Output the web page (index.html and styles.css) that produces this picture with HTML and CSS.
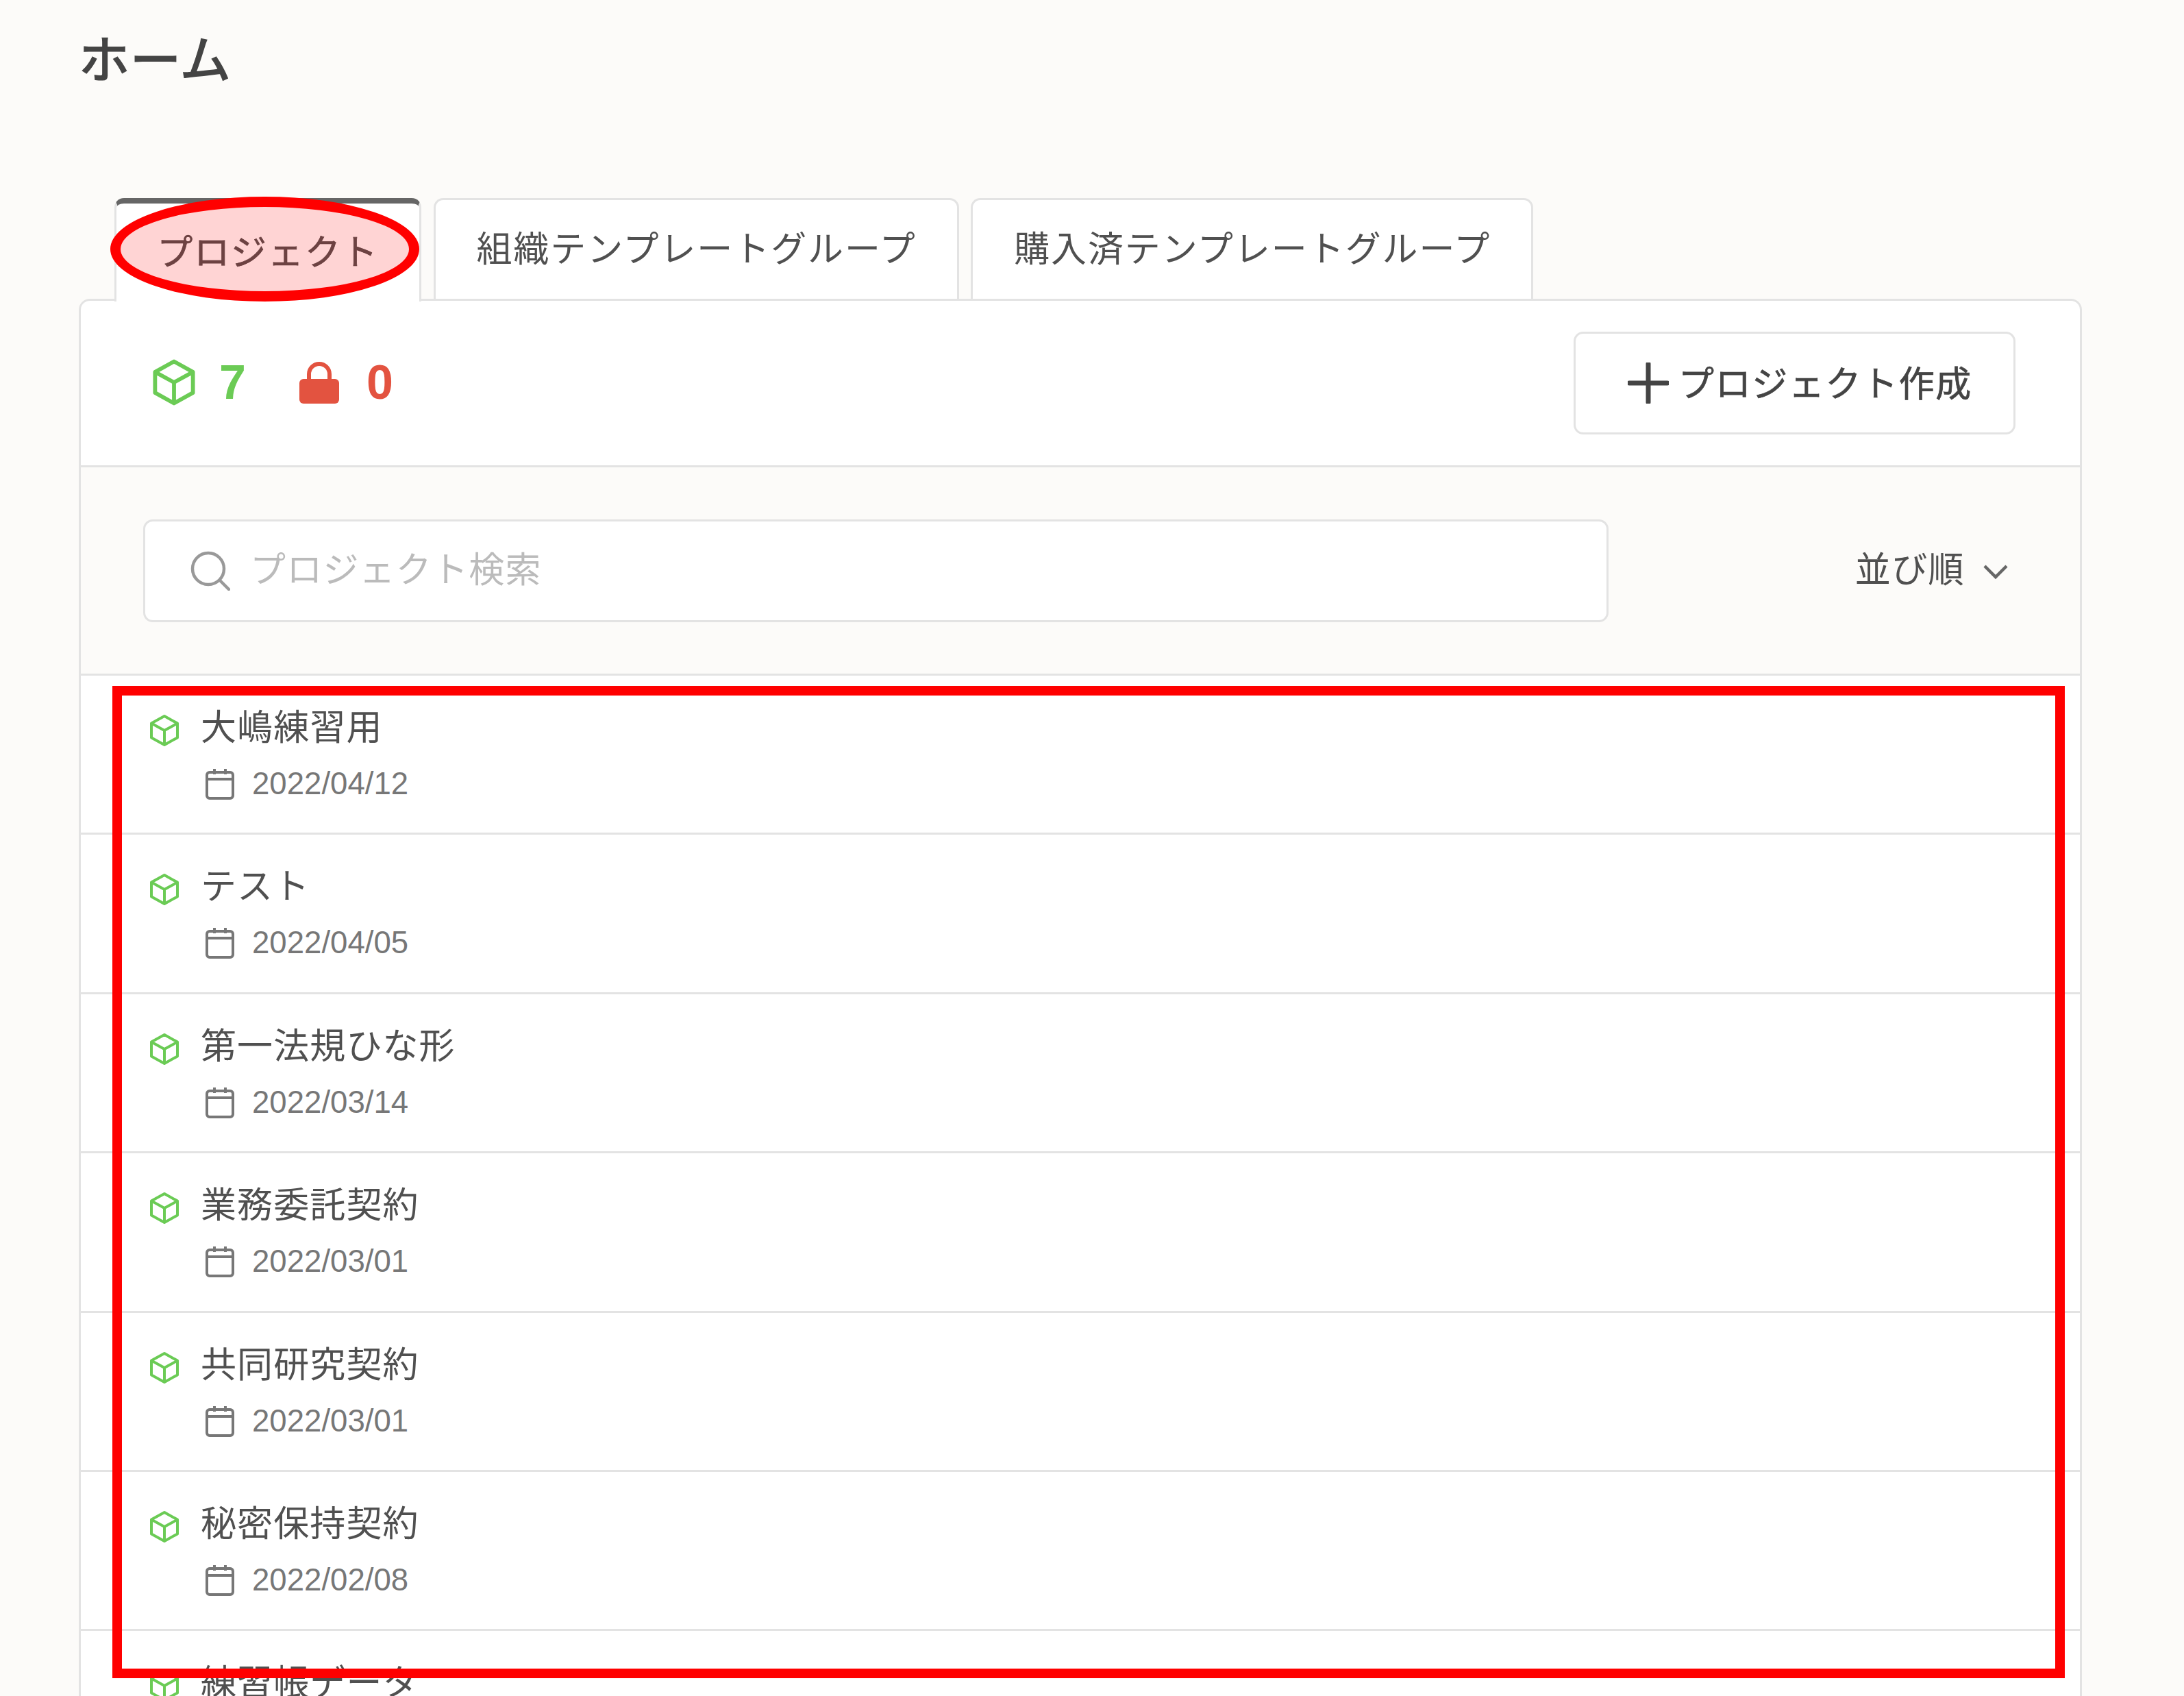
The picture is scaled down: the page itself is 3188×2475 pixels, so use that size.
FILE: index.html
```html
<!DOCTYPE html>
<html lang="ja">
<head>
<meta charset="utf-8">
<title>ホーム</title>
<link rel="stylesheet" href="styles.css">
</head>
<body>
<svg class="defs" width="0" height="0" aria-hidden="true">
  <symbol id="cube" viewBox="0 0 22 24"><path d="M11 1.5 20.5 6.8V17.2L11 22.5 1.5 17.2V6.8ZM1.5 6.8 11 12 20.5 6.8M11 12V22.5" fill="none" stroke="currentColor" stroke-width="2" stroke-linejoin="round"/></symbol>
  <symbol id="cal" viewBox="0 0 42 46"><rect x="2" y="6" width="38" height="38" rx="4" fill="none" stroke="currentColor" stroke-width="4"/><path d="M2 16H40M13 1V9M29 1V9" fill="none" stroke="currentColor" stroke-width="4"/></symbol>
</svg>
<h1 class="page-title">ホーム</h1>
<nav class="tabs">
  <div class="tab tab-active">プロジェクト</div>
  <div class="tab">組織テンプレートグループ</div>
  <div class="tab">購入済テンプレートグループ</div>
</nav>
<main class="card">
  <section class="stats">
    <div class="stat stat-green">
      <svg class="stat-cube"><use href="#cube"/></svg><span>7</span>
    </div>
    <div class="stat stat-red">
      <svg class="stat-lock" viewBox="0 0 58 62"><path d="M14 28V19a15 15 0 0 1 30 0V28" fill="none" stroke="currentColor" stroke-width="6"/><rect y="26" width="58" height="36" rx="6" fill="currentColor"/></svg><span>0</span>
    </div>
    <button class="create-btn">
      <svg class="plus" viewBox="0 0 60 60"><path d="M2 30H58M30 2V58" stroke="currentColor" stroke-width="7" stroke-linecap="round"/></svg><span class="btn-label">プロジェクト作成</span>
    </button>
  </section>
  <section class="filter">
    <div class="search">
      <svg class="search-icon" viewBox="0 0 58 58"><circle cx="26" cy="26" r="23" fill="none" stroke="currentColor" stroke-width="4.5"/><path d="M43 43 56 56" stroke="currentColor" stroke-width="4.5" stroke-linecap="round"/></svg>
      <span>プロジェクト検索</span>
    </div>
    <div class="sort">並び順<svg class="chevron" viewBox="0 0 38 24"><path d="M3 4 19 20 35 4" fill="none" stroke="currentColor" stroke-width="4.5"/></svg></div>
  </section>
  <ul class="list">
    <li class="row"><svg class="row-cube"><use href="#cube"/></svg><div><div class="row-name">大嶋練習用</div><div class="row-date"><svg class="cal"><use href="#cal"/></svg>2022/04/12</div></div></li>
    <li class="row"><svg class="row-cube"><use href="#cube"/></svg><div><div class="row-name">テスト</div><div class="row-date"><svg class="cal"><use href="#cal"/></svg>2022/04/05</div></div></li>
    <li class="row"><svg class="row-cube"><use href="#cube"/></svg><div><div class="row-name">第一法規ひな形</div><div class="row-date"><svg class="cal"><use href="#cal"/></svg>2022/03/14</div></div></li>
    <li class="row"><svg class="row-cube"><use href="#cube"/></svg><div><div class="row-name">業務委託契約</div><div class="row-date"><svg class="cal"><use href="#cal"/></svg>2022/03/01</div></div></li>
    <li class="row"><svg class="row-cube"><use href="#cube"/></svg><div><div class="row-name">共同研究契約</div><div class="row-date"><svg class="cal"><use href="#cal"/></svg>2022/03/01</div></div></li>
    <li class="row"><svg class="row-cube"><use href="#cube"/></svg><div><div class="row-name">秘密保持契約</div><div class="row-date"><svg class="cal"><use href="#cal"/></svg>2022/02/08</div></div></li>
    <li class="row"><svg class="row-cube"><use href="#cube"/></svg><div><div class="row-name">練習帳データ</div></div></li>
  </ul>
</main>
<div class="mark-ellipse"></div>
<div class="mark-rect"></div>
</body>
</html>
```

FILE: styles.css
```css
* { box-sizing: border-box; }
html, body { height: 2475px; overflow: hidden; }
body {
  margin: 0;
  position: relative;
  background: #fcfbf9;
  color: #505050;
  font-family: "Liberation Sans", "Noto Sans CJK JP", sans-serif;
  font-size: 52px;
}
.defs { position: absolute; }
.page-title {
  margin: 0;
  height: 289px;
  padding: 47px 0 0 115px;
  font-size: 74px;
  line-height: 84px;
  font-weight: 400;
  -webkit-text-stroke: 2px #444;
  letter-spacing: 1px;
  color: #444;
}
.tabs { display: flex; gap: 17.5px; margin-left: 167px; height: 147px; position: relative; }
.tab {
  height: 147px;
  padding: 0 59px 10px 60px;
  display: flex;
  align-items: center;
  background: #fff;
  border: 3px solid #e3e3e3;
  border-bottom: 0;
  border-radius: 14px 14px 0 0;
  letter-spacing: 1.9px;
  white-space: nowrap;
}
.tab-active {
  position: relative;
  z-index: 1;
  border-top: 8px solid #666;
  -webkit-text-stroke: 0.7px #4a4a4a;
  width: 448px;
  height: 151px;
  justify-content: center;
  padding: 0 0 8px;
}
.card {
  margin: 0 149px 0 115px;
  background: #fff;
  border: 3px solid #e3e3e3;
  border-bottom: 0;
  border-radius: 16px 16px 0 0;
}
.stats {
  height: 243px;
  display: flex;
  align-items: center;
  padding: 0 94px 0 104px;
  border-bottom: 3px solid #e3e3e3;
}
.stat { display: flex; align-items: center; font-size: 70px; font-weight: 700; line-height: 1; margin-top: -3px; }
.stat-green { color: #6bcb55; gap: 34px; }
.stat-red { color: #e35340; gap: 40px; margin-left: 78px; }
.stat-cube { width: 64px; height: 70px; }
.stat-lock { width: 58px; height: 62px; }
.create-btn {
  margin-left: auto;
  width: 645px;
  height: 150px;
  display: flex;
  align-items: center;
  justify-content: center;
  gap: 14px;
  background: #fff;
  border: 3px solid #e3e3e3;
  border-radius: 14px;
  color: #444;
  font: inherit;
  font-size: 52px;
  letter-spacing: 1.6px;
  padding: 0 0 0 16px;
}
.btn-label { -webkit-text-stroke: 0.7px #444; margin-top: -6px; }
.plus { width: 60px; height: 60px; }
.filter {
  height: 304px;
  display: flex;
  align-items: center;
  padding: 0 104px 0 91px;
  background: #fcfbf9;
  border-bottom: 3px solid #e3e3e3;
}
.search {
  width: 2139px;
  height: 150px;
  display: flex;
  align-items: center;
  gap: 29px;
  padding: 0 0 10px 66px;
  background: #fff;
  border: 3px solid #e3e3e3;
  border-radius: 14px;
  color: #bbb;
  letter-spacing: 1.2px;
}
.search-icon { width: 58px; height: 58px; color: #999; margin-top: 10px; }
.sort { margin-left: auto; display: flex; align-items: center; gap: 26px; letter-spacing: 1.4px; padding-bottom: 10px; }
.chevron { width: 38px; height: 24px; color: #666; margin-top: 12px; }
.list { list-style: none; margin: 0; padding: 0; }
.row {
  height: 232.4px;
  display: flex;
  align-items: flex-start;
  padding: 38px 0 0 100px;
  border-bottom: 3px solid #e3e3e3;
}
.row-cube { width: 44px; height: 48px; color: #6bcb55; margin-top: 18px; flex: none; }
.row-name { margin-left: 31px; font-size: 52px; line-height: 76px; letter-spacing: 1.1px; white-space: nowrap; }
.row-date { display: flex; align-items: center; gap: 26px; margin: 14px 0 0 38px; font-size: 45.6px; line-height: 60px; color: #777; }
.cal { width: 42px; height: 46px; }
.mark-ellipse {
  position: absolute;
  left: 161px;
  top: 287px;
  width: 451px;
  height: 153px;
  border: 15px solid #ff0000;
  border-radius: 50%;
  background: rgba(255, 0, 0, 0.17);
  z-index: 2;
}
.mark-rect {
  position: absolute;
  left: 164px;
  top: 1001px;
  width: 2850px;
  height: 1448px;
  border: 14px solid #ff0000;
  z-index: 2;
}
```
